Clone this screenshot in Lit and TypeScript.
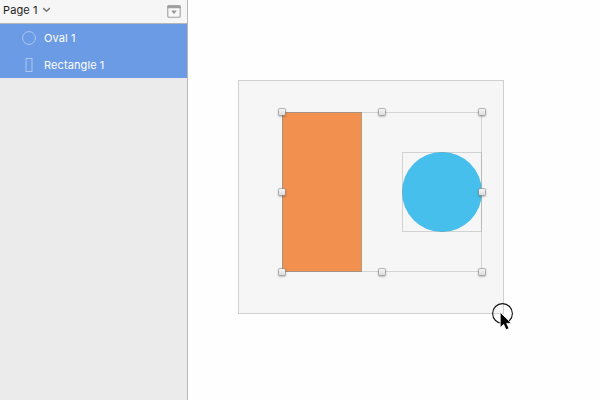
import { LitElement, html, css, svg } from "lit";
import { customElement } from "lit/decorators.js";
import { styleMap } from "lit/directives/style-map.js";

const layers = [
  { name: "Oval 1", icon: svg`<circle cx="7" cy="7" r="6.4" />` },
  { name: "Rectangle 1", icon: svg`<rect x="4" y="0.5" width="6" height="13" />` },
];

// Resize handles, as fractions of the selection box.
const handles = [
  [0, 0], [0.5, 0], [1, 0],
  [0, 0.5], [1, 0.5],
  [0, 1], [0.5, 1], [1, 1],
];

@customElement("layer-list")
class LayerList extends LitElement {
  static styles = css`
    :host { display: flex; flex-direction: column; background: #ebebeb; }
    .header {
      box-sizing: border-box; height: 24px; padding: 0 6px 3px 3px;
      display: flex; align-items: center; background: #f6f6f6;
      border-bottom: 1px solid #b5b5b5; color: #1c1c1c;
    }
    .title { letter-spacing: 0.1px; }
    .chevron { width: 9px; height: 6px; margin-left: 4px; }
    .filter { width: 14px; height: 13px; margin-left: auto; margin-top: 2px; }
    .row {
      height: 27px; display: flex; align-items: center; gap: 8px;
      padding-left: 22px; background: #6b9be4; color: #fff;
    }
    .row svg { width: 14px; height: 14px; fill: none; stroke: #aec8f1; }
    .name { letter-spacing: 0.1px; padding-top: 1px; }
  `;
  render() {
    return html`
      <div class="header">
        <span class="title">Page 1</span>
        <svg class="chevron" viewBox="0 0 9 6">
          <path d="M1.2 1.1 4.5 4.3 7.8 1.1" fill="none" stroke="#777" stroke-width="1.5" />
        </svg>
        <svg class="filter" viewBox="0 0 14 13">
          <rect x=".8" y=".8" width="12.4" height="11.4" rx="1" fill="#f8f8f8" stroke="#a0a0a0" stroke-width="1.1" />
          <path d="M.3 1.2Q.3 .2 1.3 .2H12.7Q13.7 .2 13.7 1.2V3.2H.3Z" fill="#a0a0a0" />
          <path d="M4.2 5.4H9.8L7 9.2Z" fill="#999" />
        </svg>
      </div>
      ${layers.map((l) => html`
        <div class="row">
          <svg viewBox="0 0 14 14">${l.icon}</svg>
          <span class="name">${l.name}</span>
        </div>`)}
    `;
  }
}

@customElement("design-canvas")
class DesignCanvas extends LitElement {
  static styles = css`
    :host { display: block; position: relative; background: #fefefe; overflow: hidden; }
    div, .cursor { position: absolute; box-sizing: border-box; }
    .artboard {
      left: 50px; top: 80px; width: 266px; height: 234px;
      background: #f6f6f6; border: 1px solid #d0d0d0;
    }
    .rectangle {
      left: 94px; top: 112px; width: 80px; height: 160px;
      background: #f2904f; border: 1px solid #b89a84;
    }
    .oval {
      left: 214px; top: 152px; width: 80px; height: 80px;
      border-radius: 50%; background: #47bfec;
    }
    .bounds {
      left: 214px; top: 152px; width: 80px; height: 80px;
      border: 1px solid rgba(120, 120, 120, 0.28);
    }
    .selection {
      left: 94px; top: 112px; width: 200px; height: 160px;
      border: 1px solid rgba(120, 120, 120, 0.26);
    }
    .handles { left: 94px; top: 112px; width: 200px; height: 160px; }
    .handle {
      width: 6px; height: 6px; margin: -3px 0 0 -3px; border-radius: 1px;
      background: linear-gradient(#f4f4f4, #dedede);
      box-shadow: 0 0 0 1px rgba(150, 150, 150, 0.65), 0 1px 2px 1px rgba(0, 0, 0, 0.22);
    }
    .cursor { left: 302px; top: 301px; width: 26px; height: 32px; }
  `;
  render() {
    return html`
      <div class="artboard"></div>
      <div class="rectangle"></div>
      <div class="oval"></div>
      <div class="bounds"></div>
      <div class="selection"></div>
      <div class="handles">
        ${handles.map(([x, y]) => html`
          <div class="handle" style=${styleMap({ left: `${x * 100}%`, top: `${y * 100}%` })}></div>`)}
      </div>
      <svg class="cursor" viewBox="0 0 26 32">
        <circle cx="12.5" cy="12.5" r="9.9" fill="none" stroke="#111" stroke-width="1.1" />
        <path d="M10.2 11.2V26.6L13.7 23.4L16 28.8L19 27.5L16.7 22.4H21.4Z"
          fill="#050505" stroke="#fff" stroke-width="0.8" />
      </svg>
    `;
  }
}

@customElement("app-root")
class AppRoot extends LitElement {
  static styles = css`
    :host {
      display: grid; grid-template-columns: 188px 1fr; width: 600px; height: 400px;
      overflow: hidden; font: 11px/14px Inter, "Liberation Sans", sans-serif;
    }
    .sidebar { box-sizing: border-box; border-right: 1px solid #b8b8b8; }
  `;
  render() {
    return html`
      <layer-list class="sidebar"></layer-list>
      <design-canvas></design-canvas>
    `;
  }
}
